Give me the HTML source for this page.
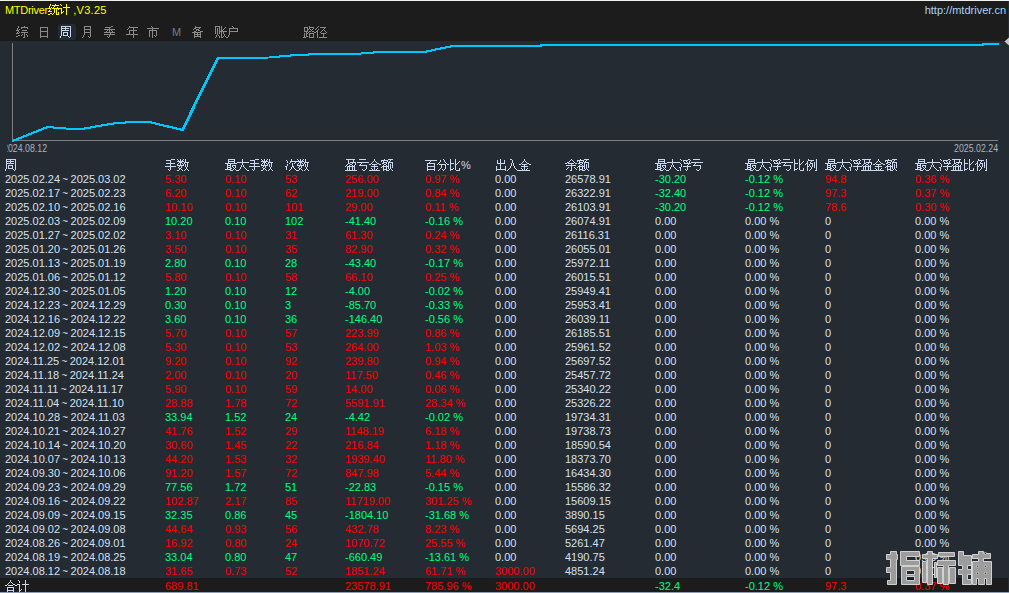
<!DOCTYPE html>
<html><head><meta charset="utf-8">
<style>
html,body{margin:0;padding:0;}
body{width:1009px;height:593px;position:relative;overflow:hidden;background:#252b33;font-family:"Liberation Sans",sans-serif;font-size:11px;}
.topline{position:absolute;left:0;top:0;width:1009px;height:1px;background:#f0f0f0;}
.hdr{position:absolute;left:0;top:1px;width:1008px;height:40px;background:#1c1c1c;}
.title{position:absolute;left:5px;top:4px;color:#ffff00;font-size:11px;line-height:13px;white-space:nowrap;}
.url{position:absolute;right:3px;top:4px;color:#a8d4f8;font-size:11px;line-height:13px;}
.tab{position:absolute;top:24px;height:16px;line-height:16px;color:#8a8a8a;font-size:12px;white-space:nowrap;}
.tabact{position:absolute;left:58px;top:24px;width:18px;height:16px;background:#222a33;border-radius:2px;}
.chart{position:absolute;left:0;top:41px;}
.row{position:absolute;left:0;height:14px;width:1009px;}
.row span{position:absolute;top:0;line-height:14px;white-space:nowrap;}
.w{color:#d4e0f0;}
.r{color:#ff0000;}
.g{color:#00ff7f;}
.hd{color:#cad8ef;font-size:12px;}
.total{position:absolute;left:0;top:578px;width:1008px;height:14px;background:#1c1c1c;}
.botline{position:absolute;left:0;top:592px;width:1009px;height:1px;background:#8c9db5;}
.axlbl{position:absolute;top:143px;color:#a9b3c1;font-size:10px;line-height:12px;transform-origin:0 0;transform:scaleX(0.88);}
</style></head><body>
<div class="topline"></div>
<div class="hdr"></div>
<div class="title"><span style="letter-spacing:-0.3px">MTDriver</span><svg width="11" height="6" viewBox="0 0 11 6" style="overflow:visible;vertical-align:baseline;display:inline;position:static" fill="currentColor" shape-rendering="crispEdges"><path d="M2,-4h1v1h-1zM7,-4h1v1h-1zM2,-3h1v1h-1zM4,-3h7v1h-7zM1,-2h1v1h-1zM6,-2h1v1h-1zM1,-1h1v1h-1zM3,-1h1v1h-1zM5,-1h1v1h-1zM9,-1h1v1h-1zM0,0h3v1h-3zM4,0h7v1h-7zM2,1h1v1h-1zM6,1h1v1h-1zM8,1h1v1h-1zM10,1h1v1h-1zM1,2h1v1h-1zM6,2h1v1h-1zM8,2h1v1h-1zM0,3h4v1h-4zM6,3h1v1h-1zM8,3h1v1h-1zM6,4h1v1h-1zM8,4h1v1h-1zM10,4h1v1h-1zM2,5h2v1h-2zM5,5h1v1h-1zM8,5h1v1h-1zM10,5h1v1h-1zM0,6h2v1h-2zM4,6h1v1h-1zM8,6h3v1h-3z"/></svg><svg width="11" height="6" viewBox="0 0 11 6" style="overflow:visible;vertical-align:baseline;display:inline;position:static" fill="currentColor" shape-rendering="crispEdges"><path d="M1,-4h1v1h-1zM7,-4h1v1h-1zM2,-3h1v1h-1zM7,-3h1v1h-1zM7,-2h1v1h-1zM4,-1h7v1h-7zM0,0h3v1h-3zM7,0h1v1h-1zM2,1h1v1h-1zM7,1h1v1h-1zM2,2h1v1h-1zM7,2h1v1h-1zM2,3h1v1h-1zM4,3h1v1h-1zM7,3h1v1h-1zM2,4h2v1h-2zM7,4h1v1h-1zM2,5h1v1h-1zM7,5h1v1h-1zM7,6h1v1h-1z"/></svg><span style="letter-spacing:0.3px"> ,V3.25</span></div>
<div class="url">http://mtdriver.cn</div>
<div class="tabact"></div>
<div class="tab" style="left:16px"><svg width="12" height="6" viewBox="0 0 12 6" style="overflow:visible;vertical-align:baseline;display:inline;position:static" fill="currentColor" shape-rendering="crispEdges"><path d="M2,-4h1v1h-1zM8,-4h1v1h-1zM2,-3h1v1h-1zM5,-3h7v1h-7zM1,-2h1v1h-1zM5,-2h1v1h-1zM11,-2h1v1h-1zM1,-1h1v1h-1zM3,-1h1v1h-1zM0,0h3v1h-3zM6,0h5v1h-5zM2,1h1v1h-1zM1,2h1v1h-1zM3,2h1v1h-1zM5,2h7v1h-7zM0,3h3v1h-3zM8,3h1v1h-1zM6,4h1v1h-1zM8,4h1v1h-1zM10,4h1v1h-1zM2,5h2v1h-2zM5,5h1v1h-1zM8,5h1v1h-1zM11,5h1v1h-1zM0,6h2v1h-2zM8,6h1v1h-1zM11,6h1v1h-1zM7,7h2v1h-2z"/></svg></div>
<div class="tab" style="left:38px"><svg width="12" height="6" viewBox="0 0 12 6" style="overflow:visible;vertical-align:baseline;display:inline;position:static" fill="currentColor" shape-rendering="crispEdges"><path d="M2,-3h8v1h-8zM2,-2h1v1h-1zM9,-2h1v1h-1zM2,-1h1v1h-1zM9,-1h1v1h-1zM2,0h1v1h-1zM9,0h1v1h-1zM2,1h8v1h-8zM2,2h1v1h-1zM9,2h1v1h-1zM2,3h1v1h-1zM9,3h1v1h-1zM2,4h1v1h-1zM9,4h1v1h-1zM2,5h1v1h-1zM9,5h1v1h-1zM2,6h8v1h-8zM2,7h1v1h-1zM9,7h1v1h-1z"/></svg></div>
<div class="tab" style="left:60px;color:#c8d6e6"><svg width="12" height="6" viewBox="0 0 12 6" style="overflow:visible;vertical-align:baseline;display:inline;position:static" fill="currentColor" shape-rendering="crispEdges"><path d="M1,-4h10v1h-10zM1,-3h1v1h-1zM5,-3h1v1h-1zM10,-3h1v1h-1zM1,-2h8v1h-8zM10,-2h1v1h-1zM1,-1h1v1h-1zM5,-1h1v1h-1zM10,-1h1v1h-1zM1,0h8v1h-8zM10,0h1v1h-1zM1,1h1v1h-1zM10,1h1v1h-1zM1,2h1v1h-1zM3,2h5v1h-5zM10,2h1v1h-1zM1,3h1v1h-1zM3,3h1v1h-1zM7,3h1v1h-1zM10,3h1v1h-1zM1,4h1v1h-1zM3,4h1v1h-1zM7,4h1v1h-1zM10,4h1v1h-1zM1,5h1v1h-1zM3,5h5v1h-5zM10,5h1v1h-1zM0,6h1v1h-1zM8,6h1v1h-1zM10,6h1v1h-1zM0,7h1v1h-1zM9,7h1v1h-1z"/></svg></div>
<div class="tab" style="left:81px"><svg width="12" height="6" viewBox="0 0 12 6" style="overflow:visible;vertical-align:baseline;display:inline;position:static" fill="currentColor" shape-rendering="crispEdges"><path d="M3,-4h7v1h-7zM3,-3h1v1h-1zM9,-3h1v1h-1zM3,-2h1v1h-1zM9,-2h1v1h-1zM3,-1h7v1h-7zM3,0h1v1h-1zM9,0h1v1h-1zM3,1h1v1h-1zM9,1h1v1h-1zM3,2h7v1h-7zM3,3h1v1h-1zM9,3h1v1h-1zM3,4h1v1h-1zM9,4h1v1h-1zM2,5h1v1h-1zM9,5h1v1h-1zM2,6h1v1h-1zM7,6h1v1h-1zM9,6h1v1h-1zM1,7h1v1h-1zM8,7h1v1h-1z"/></svg></div>
<div class="tab" style="left:104px"><svg width="12" height="6" viewBox="0 0 12 6" style="overflow:visible;vertical-align:baseline;display:inline;position:static" fill="currentColor" shape-rendering="crispEdges"><path d="M7,-4h2v1h-2zM1,-3h6v1h-6zM5,-2h1v1h-1zM0,-1h11v1h-11zM3,0h1v1h-1zM5,0h1v1h-1zM7,0h1v1h-1zM2,1h1v1h-1zM5,1h1v1h-1zM8,1h1v1h-1zM0,2h11v1h-11zM6,3h1v1h-1zM0,4h11v1h-11zM5,5h1v1h-1zM3,6h1v1h-1zM5,6h1v1h-1zM4,7h1v1h-1z"/></svg></div>
<div class="tab" style="left:126px"><svg width="12" height="6" viewBox="0 0 12 6" style="overflow:visible;vertical-align:baseline;display:inline;position:static" fill="currentColor" shape-rendering="crispEdges"><path d="M3,-4h1v1h-1zM3,-3h9v1h-9zM2,-2h1v1h-1zM7,-2h1v1h-1zM1,-1h1v1h-1zM7,-1h1v1h-1zM3,0h8v1h-8zM3,1h1v1h-1zM7,1h1v1h-1zM3,2h1v1h-1zM7,2h1v1h-1zM3,3h1v1h-1zM7,3h1v1h-1zM0,4h12v1h-12zM7,5h1v1h-1zM7,6h1v1h-1zM7,7h1v1h-1z"/></svg></div>
<div class="tab" style="left:147px"><svg width="12" height="6" viewBox="0 0 12 6" style="overflow:visible;vertical-align:baseline;display:inline;position:static" fill="currentColor" shape-rendering="crispEdges"><path d="M4,-4h1v1h-1zM5,-3h1v1h-1zM0,-2h12v1h-12zM5,-1h1v1h-1zM2,0h8v1h-8zM2,1h1v1h-1zM5,1h1v1h-1zM9,1h1v1h-1zM2,2h1v1h-1zM5,2h1v1h-1zM9,2h1v1h-1zM2,3h1v1h-1zM5,3h1v1h-1zM9,3h1v1h-1zM2,4h1v1h-1zM5,4h1v1h-1zM9,4h1v1h-1zM2,5h1v1h-1zM5,5h1v1h-1zM7,5h1v1h-1zM9,5h1v1h-1zM2,6h1v1h-1zM5,6h1v1h-1zM8,6h1v1h-1zM5,7h1v1h-1z"/></svg></div>
<div class="tab" style="left:172px;font-size:11px;color:#6f7f94">M</div>
<div class="tab" style="left:192px"><svg width="12" height="6" viewBox="0 0 12 6" style="overflow:visible;vertical-align:baseline;display:inline;position:static" fill="currentColor" shape-rendering="crispEdges"><path d="M3,-4h1v1h-1zM3,-3h6v1h-6zM2,-2h2v1h-2zM7,-2h1v1h-1zM1,-1h1v1h-1zM4,-1h3v1h-3zM4,0h1v1h-1zM6,0h2v1h-2zM2,1h2v1h-2zM8,1h3v1h-3zM0,2h9v1h-9zM2,3h1v1h-1zM5,3h1v1h-1zM8,3h1v1h-1zM2,4h7v1h-7zM2,5h1v1h-1zM5,5h1v1h-1zM8,5h1v1h-1zM2,6h7v1h-7zM2,7h1v1h-1zM8,7h1v1h-1z"/></svg></div>
<div class="tab" style="left:215px"><svg width="12" height="6" viewBox="0 0 12 6" style="overflow:visible;vertical-align:baseline;display:inline;position:static" fill="currentColor" shape-rendering="crispEdges"><path d="M0,-4h5v1h-5zM6,-4h1v1h-1zM0,-3h1v1h-1zM4,-3h1v1h-1zM6,-3h1v1h-1zM10,-3h1v1h-1zM0,-2h1v1h-1zM2,-2h1v1h-1zM4,-2h1v1h-1zM6,-2h1v1h-1zM9,-2h1v1h-1zM0,-1h1v1h-1zM2,-1h1v1h-1zM4,-1h1v1h-1zM6,-1h1v1h-1zM8,-1h1v1h-1zM0,0h1v1h-1zM2,0h1v1h-1zM4,0h1v1h-1zM6,0h2v1h-2zM0,1h1v1h-1zM2,1h1v1h-1zM4,1h8v1h-8zM0,2h1v1h-1zM2,2h1v1h-1zM4,2h1v1h-1zM6,2h1v1h-1zM8,2h1v1h-1zM0,3h1v1h-1zM2,3h1v1h-1zM4,3h1v1h-1zM6,3h1v1h-1zM8,3h1v1h-1zM2,4h1v1h-1zM6,4h1v1h-1zM9,4h1v1h-1zM1,5h1v1h-1zM3,5h1v1h-1zM6,5h1v1h-1zM9,5h1v1h-1zM1,6h1v1h-1zM4,6h1v1h-1zM6,6h1v1h-1zM8,6h1v1h-1zM10,6h1v1h-1zM0,7h1v1h-1zM4,7h1v1h-1zM6,7h2v1h-2zM11,7h1v1h-1z"/></svg><svg width="12" height="6" viewBox="0 0 12 6" style="overflow:visible;vertical-align:baseline;display:inline;position:static" fill="currentColor" shape-rendering="crispEdges"><path d="M5,-4h1v1h-1zM6,-3h1v1h-1zM2,-2h9v1h-9zM2,-1h1v1h-1zM10,-1h1v1h-1zM2,0h1v1h-1zM10,0h1v1h-1zM2,1h9v1h-9zM2,2h1v1h-1zM2,3h1v1h-1zM2,4h1v1h-1zM1,5h1v1h-1zM1,6h1v1h-1zM0,7h1v1h-1z"/></svg></div>
<div class="tab" style="left:303px"><svg width="12" height="6" viewBox="0 0 12 6" style="overflow:visible;vertical-align:baseline;display:inline;position:static" fill="currentColor" shape-rendering="crispEdges"><path d="M6,-4h1v1h-1zM1,-3h4v1h-4zM6,-3h5v1h-5zM1,-2h1v1h-1zM4,-2h1v1h-1zM6,-2h1v1h-1zM10,-2h1v1h-1zM1,-1h1v1h-1zM4,-1h2v1h-2zM7,-1h1v1h-1zM9,-1h1v1h-1zM1,0h1v1h-1zM4,0h1v1h-1zM8,0h1v1h-1zM1,1h4v1h-4zM6,1h2v1h-2zM9,1h2v1h-2zM3,2h1v1h-1zM5,2h1v1h-1zM11,2h1v1h-1zM1,3h1v1h-1zM3,3h2v1h-2zM6,3h5v1h-5zM1,4h1v1h-1zM3,4h1v1h-1zM6,4h1v1h-1zM10,4h1v1h-1zM1,5h1v1h-1zM3,5h1v1h-1zM6,5h1v1h-1zM10,5h1v1h-1zM1,6h1v1h-1zM3,6h2v1h-2zM6,6h1v1h-1zM10,6h1v1h-1zM0,7h3v1h-3zM6,7h5v1h-5z"/></svg><svg width="12" height="6" viewBox="0 0 12 6" style="overflow:visible;vertical-align:baseline;display:inline;position:static" fill="currentColor" shape-rendering="crispEdges"><path d="M3,-4h1v1h-1zM2,-3h1v1h-1zM5,-3h6v1h-6zM1,-2h1v1h-1zM9,-2h1v1h-1zM0,-1h1v1h-1zM3,-1h1v1h-1zM8,-1h1v1h-1zM2,0h1v1h-1zM7,0h1v1h-1zM9,0h1v1h-1zM1,1h2v1h-2zM6,1h1v1h-1zM10,1h1v1h-1zM0,2h1v1h-1zM2,2h1v1h-1zM5,2h1v1h-1zM11,2h1v1h-1zM2,3h1v1h-1zM6,3h5v1h-5zM2,4h1v1h-1zM8,4h1v1h-1zM2,5h1v1h-1zM8,5h1v1h-1zM2,6h1v1h-1zM8,6h1v1h-1zM2,7h1v1h-1zM4,7h8v1h-8z"/></svg></div>
<svg class="chart" width="1009" height="110" viewBox="0 41 1009 110" style="position:absolute;left:0;top:41px">
<line x1="12.5" y1="43" x2="12.5" y2="141" stroke="#7f7f7f" stroke-width="1"/>
<line x1="12" y1="140.5" x2="998" y2="140.5" stroke="#7f7f7f" stroke-width="1"/>
<polyline points="12,141 47,127 78,129.5 113,123.5 125,122.5 147,121.5 182,130 217.5,58 269,57.5 290,55.5 303,55 314,54 361.5,53.5 379.5,52 423.5,52 452.5,46 540.5,46 541,45 982,45 982.5,44 998,44" fill="none" stroke="#00c8ff" stroke-width="2" stroke-linejoin="miter" shape-rendering="crispEdges"/>
<polyline points="12,141 47,127 78,129.5 113,123.5 125,122.5 147,121.5 182,130 217.5,58 269,57.5 290,55.5 303,55 314,54 361.5,53.5 379.5,52 423.5,52 452.5,46 540.5,46 541,45 982,45 982.5,44 998,44" fill="none" stroke="#00c8ff" stroke-width="2" stroke-linejoin="miter" shape-rendering="crispEdges" transform="translate(0.8,0)"/>
</svg>
<svg width="1009" height="60" style="position:absolute;left:0;top:0"><polygon points="1004.5,41.5 1009,37.5 1009,45.5" fill="#c8c8c8"/></svg>
<div style="position:absolute;left:7px;top:143px;width:60px;height:14px;overflow:hidden"><div class="axlbl" style="left:-4px;top:0">2024.08.12</div></div>
<div class="axlbl" style="left:954px">2025.02.24</div>
<div class="row" style="top:158px"><span class="hd" style="left:5px"><svg width="12" height="6" viewBox="0 0 12 6" style="overflow:visible;vertical-align:baseline;display:inline;position:static" fill="currentColor" shape-rendering="crispEdges"><path d="M1,-4h10v1h-10zM1,-3h1v1h-1zM5,-3h1v1h-1zM10,-3h1v1h-1zM1,-2h8v1h-8zM10,-2h1v1h-1zM1,-1h1v1h-1zM5,-1h1v1h-1zM10,-1h1v1h-1zM1,0h8v1h-8zM10,0h1v1h-1zM1,1h1v1h-1zM10,1h1v1h-1zM1,2h1v1h-1zM3,2h5v1h-5zM10,2h1v1h-1zM1,3h1v1h-1zM3,3h1v1h-1zM7,3h1v1h-1zM10,3h1v1h-1zM1,4h1v1h-1zM3,4h1v1h-1zM7,4h1v1h-1zM10,4h1v1h-1zM1,5h1v1h-1zM3,5h5v1h-5zM10,5h1v1h-1zM0,6h1v1h-1zM8,6h1v1h-1zM10,6h1v1h-1zM0,7h1v1h-1zM9,7h1v1h-1z"/></svg></span><span class="hd" style="left:165px"><svg width="12" height="6" viewBox="0 0 12 6" style="overflow:visible;vertical-align:baseline;display:inline;position:static" fill="currentColor" shape-rendering="crispEdges"><path d="M6,-4h4v1h-4zM1,-3h5v1h-5zM5,-2h1v1h-1zM5,-1h1v1h-1zM1,0h9v1h-9zM5,1h1v1h-1zM5,2h1v1h-1zM0,3h11v1h-11zM5,4h1v1h-1zM5,5h1v1h-1zM3,6h1v1h-1zM5,6h1v1h-1zM4,7h1v1h-1z"/></svg><svg width="12" height="6" viewBox="0 0 12 6" style="overflow:visible;vertical-align:baseline;display:inline;position:static" fill="currentColor" shape-rendering="crispEdges"><path d="M0,-4h1v1h-1zM3,-4h1v1h-1zM6,-4h1v1h-1zM8,-4h1v1h-1zM1,-3h1v1h-1zM3,-3h1v1h-1zM5,-3h1v1h-1zM8,-3h1v1h-1zM0,-2h7v1h-7zM8,-2h1v1h-1zM2,-1h3v1h-3zM7,-1h5v1h-5zM1,0h1v1h-1zM3,0h1v1h-1zM5,0h1v1h-1zM7,0h1v1h-1zM10,0h1v1h-1zM0,1h1v1h-1zM3,1h1v1h-1zM6,1h1v1h-1zM8,1h1v1h-1zM10,1h1v1h-1zM0,2h7v1h-7zM8,2h1v1h-1zM10,2h1v1h-1zM2,3h1v1h-1zM4,3h1v1h-1zM8,3h1v1h-1zM10,3h1v1h-1zM1,4h1v1h-1zM4,4h1v1h-1zM9,4h1v1h-1zM2,5h2v1h-2zM9,5h1v1h-1zM2,6h1v1h-1zM4,6h1v1h-1zM8,6h1v1h-1zM10,6h1v1h-1zM0,7h2v1h-2zM5,7h1v1h-1zM7,7h1v1h-1zM11,7h1v1h-1z"/></svg></span><span class="hd" style="left:225px"><svg width="12" height="6" viewBox="0 0 12 6" style="overflow:visible;vertical-align:baseline;display:inline;position:static" fill="currentColor" shape-rendering="crispEdges"><path d="M3,-4h7v1h-7zM3,-3h1v1h-1zM9,-3h1v1h-1zM3,-2h7v1h-7zM3,-1h1v1h-1zM9,-1h1v1h-1zM0,0h12v1h-12zM2,1h1v1h-1zM5,1h1v1h-1zM2,2h4v1h-4zM7,2h4v1h-4zM2,3h1v1h-1zM5,3h1v1h-1zM7,3h1v1h-1zM10,3h1v1h-1zM2,4h4v1h-4zM8,4h1v1h-1zM10,4h1v1h-1zM2,5h1v1h-1zM5,5h2v1h-2zM9,5h1v1h-1zM0,6h6v1h-6zM8,6h1v1h-1zM10,6h1v1h-1zM5,7h3v1h-3zM11,7h1v1h-1z"/></svg><svg width="12" height="6" viewBox="0 0 12 6" style="overflow:visible;vertical-align:baseline;display:inline;position:static" fill="currentColor" shape-rendering="crispEdges"><path d="M5,-4h1v1h-1zM5,-3h1v1h-1zM5,-2h1v1h-1zM0,-1h12v1h-12zM5,0h1v1h-1zM5,1h1v1h-1zM4,2h1v1h-1zM6,2h1v1h-1zM4,3h1v1h-1zM6,3h1v1h-1zM3,4h1v1h-1zM7,4h1v1h-1zM3,5h1v1h-1zM8,5h1v1h-1zM2,6h1v1h-1zM9,6h1v1h-1zM0,7h2v1h-2zM10,7h2v1h-2z"/></svg><svg width="12" height="6" viewBox="0 0 12 6" style="overflow:visible;vertical-align:baseline;display:inline;position:static" fill="currentColor" shape-rendering="crispEdges"><path d="M6,-4h4v1h-4zM1,-3h5v1h-5zM5,-2h1v1h-1zM5,-1h1v1h-1zM1,0h9v1h-9zM5,1h1v1h-1zM5,2h1v1h-1zM0,3h11v1h-11zM5,4h1v1h-1zM5,5h1v1h-1zM3,6h1v1h-1zM5,6h1v1h-1zM4,7h1v1h-1z"/></svg><svg width="12" height="6" viewBox="0 0 12 6" style="overflow:visible;vertical-align:baseline;display:inline;position:static" fill="currentColor" shape-rendering="crispEdges"><path d="M0,-4h1v1h-1zM3,-4h1v1h-1zM6,-4h1v1h-1zM8,-4h1v1h-1zM1,-3h1v1h-1zM3,-3h1v1h-1zM5,-3h1v1h-1zM8,-3h1v1h-1zM0,-2h7v1h-7zM8,-2h1v1h-1zM2,-1h3v1h-3zM7,-1h5v1h-5zM1,0h1v1h-1zM3,0h1v1h-1zM5,0h1v1h-1zM7,0h1v1h-1zM10,0h1v1h-1zM0,1h1v1h-1zM3,1h1v1h-1zM6,1h1v1h-1zM8,1h1v1h-1zM10,1h1v1h-1zM0,2h7v1h-7zM8,2h1v1h-1zM10,2h1v1h-1zM2,3h1v1h-1zM4,3h1v1h-1zM8,3h1v1h-1zM10,3h1v1h-1zM1,4h1v1h-1zM4,4h1v1h-1zM9,4h1v1h-1zM2,5h2v1h-2zM9,5h1v1h-1zM2,6h1v1h-1zM4,6h1v1h-1zM8,6h1v1h-1zM10,6h1v1h-1zM0,7h2v1h-2zM5,7h1v1h-1zM7,7h1v1h-1zM11,7h1v1h-1z"/></svg></span><span class="hd" style="left:285px"><svg width="12" height="6" viewBox="0 0 12 6" style="overflow:visible;vertical-align:baseline;display:inline;position:static" fill="currentColor" shape-rendering="crispEdges"><path d="M6,-4h1v1h-1zM1,-3h1v1h-1zM6,-3h1v1h-1zM2,-2h1v1h-1zM5,-2h7v1h-7zM2,-1h1v1h-1zM5,-1h1v1h-1zM10,-1h1v1h-1zM4,0h1v1h-1zM7,0h1v1h-1zM9,0h1v1h-1zM2,1h1v1h-1zM7,1h1v1h-1zM2,2h1v1h-1zM7,2h1v1h-1zM0,3h2v1h-2zM7,3h2v1h-2zM1,4h1v1h-1zM6,4h1v1h-1zM8,4h1v1h-1zM1,5h1v1h-1zM6,5h1v1h-1zM9,5h1v1h-1zM1,6h1v1h-1zM5,6h1v1h-1zM10,6h1v1h-1zM4,7h1v1h-1zM11,7h1v1h-1z"/></svg><svg width="12" height="6" viewBox="0 0 12 6" style="overflow:visible;vertical-align:baseline;display:inline;position:static" fill="currentColor" shape-rendering="crispEdges"><path d="M0,-4h1v1h-1zM3,-4h1v1h-1zM6,-4h1v1h-1zM8,-4h1v1h-1zM1,-3h1v1h-1zM3,-3h1v1h-1zM5,-3h1v1h-1zM8,-3h1v1h-1zM0,-2h7v1h-7zM8,-2h1v1h-1zM2,-1h3v1h-3zM7,-1h5v1h-5zM1,0h1v1h-1zM3,0h1v1h-1zM5,0h1v1h-1zM7,0h1v1h-1zM10,0h1v1h-1zM0,1h1v1h-1zM3,1h1v1h-1zM6,1h1v1h-1zM8,1h1v1h-1zM10,1h1v1h-1zM0,2h7v1h-7zM8,2h1v1h-1zM10,2h1v1h-1zM2,3h1v1h-1zM4,3h1v1h-1zM8,3h1v1h-1zM10,3h1v1h-1zM1,4h1v1h-1zM4,4h1v1h-1zM9,4h1v1h-1zM2,5h2v1h-2zM9,5h1v1h-1zM2,6h1v1h-1zM4,6h1v1h-1zM8,6h1v1h-1zM10,6h1v1h-1zM0,7h2v1h-2zM5,7h1v1h-1zM7,7h1v1h-1zM11,7h1v1h-1z"/></svg></span><span class="hd" style="left:345px"><svg width="12" height="6" viewBox="0 0 12 6" style="overflow:visible;vertical-align:baseline;display:inline;position:static" fill="currentColor" shape-rendering="crispEdges"><path d="M1,-4h9v1h-9zM3,-3h1v1h-1zM8,-3h1v1h-1zM3,-2h1v1h-1zM8,-2h1v1h-1zM3,-1h1v1h-1zM5,-1h6v1h-6zM3,0h2v1h-2zM7,0h1v1h-1zM10,0h1v1h-1zM2,1h1v1h-1zM5,1h2v1h-2zM10,1h1v1h-1zM1,2h1v1h-1zM4,2h1v1h-1zM7,2h1v1h-1zM9,2h1v1h-1zM0,3h1v1h-1zM2,3h8v1h-8zM2,4h1v1h-1zM4,4h1v1h-1zM7,4h1v1h-1zM9,4h1v1h-1zM2,5h1v1h-1zM4,5h1v1h-1zM7,5h1v1h-1zM9,5h1v1h-1zM2,6h1v1h-1zM4,6h1v1h-1zM7,6h1v1h-1zM9,6h1v1h-1zM0,7h12v1h-12z"/></svg><svg width="12" height="6" viewBox="0 0 12 6" style="overflow:visible;vertical-align:baseline;display:inline;position:static" fill="currentColor" shape-rendering="crispEdges"><path d="M2,-4h7v1h-7zM0,-1h12v1h-12zM4,0h1v1h-1zM3,1h1v1h-1zM2,2h8v1h-8zM9,3h1v1h-1zM9,4h1v1h-1zM9,5h1v1h-1zM5,6h1v1h-1zM8,6h1v1h-1zM6,7h2v1h-2z"/></svg><svg width="12" height="6" viewBox="0 0 12 6" style="overflow:visible;vertical-align:baseline;display:inline;position:static" fill="currentColor" shape-rendering="crispEdges"><path d="M5,-4h1v1h-1zM5,-3h1v1h-1zM4,-2h1v1h-1zM6,-2h1v1h-1zM3,-1h1v1h-1zM7,-1h1v1h-1zM2,0h1v1h-1zM8,0h2v1h-2zM0,1h2v1h-2zM3,1h5v1h-5zM10,1h2v1h-2zM5,2h1v1h-1zM2,3h7v1h-7zM5,4h1v1h-1zM2,5h1v1h-1zM5,5h1v1h-1zM8,5h1v1h-1zM3,6h1v1h-1zM5,6h1v1h-1zM7,6h1v1h-1zM0,7h11v1h-11z"/></svg><svg width="12" height="6" viewBox="0 0 12 6" style="overflow:visible;vertical-align:baseline;display:inline;position:static" fill="currentColor" shape-rendering="crispEdges"><path d="M3,-4h1v1h-1zM7,-4h5v1h-5zM0,-3h7v1h-7zM9,-3h1v1h-1zM0,-2h1v1h-1zM2,-2h1v1h-1zM6,-2h1v1h-1zM8,-2h1v1h-1zM2,-1h4v1h-4zM7,-1h5v1h-5zM1,0h2v1h-2zM5,0h1v1h-1zM7,0h1v1h-1zM11,0h1v1h-1zM3,1h2v1h-2zM7,1h1v1h-1zM9,1h1v1h-1zM11,1h1v1h-1zM2,2h1v1h-1zM5,2h1v1h-1zM7,2h1v1h-1zM9,2h1v1h-1zM11,2h1v1h-1zM1,3h7v1h-7zM9,3h1v1h-1zM11,3h1v1h-1zM0,4h1v1h-1zM2,4h1v1h-1zM5,4h1v1h-1zM7,4h1v1h-1zM9,4h1v1h-1zM11,4h1v1h-1zM2,5h1v1h-1zM5,5h1v1h-1zM7,5h1v1h-1zM9,5h1v1h-1zM2,6h4v1h-4zM8,6h1v1h-1zM10,6h1v1h-1zM2,7h1v1h-1zM5,7h3v1h-3zM11,7h1v1h-1z"/></svg></span><span class="hd" style="left:425px"><svg width="12" height="6" viewBox="0 0 12 6" style="overflow:visible;vertical-align:baseline;display:inline;position:static" fill="currentColor" shape-rendering="crispEdges"><path d="M0,-3h12v1h-12zM5,-2h1v1h-1zM4,-1h1v1h-1zM2,0h8v1h-8zM2,1h1v1h-1zM9,1h1v1h-1zM2,2h1v1h-1zM9,2h1v1h-1zM2,3h8v1h-8zM2,4h1v1h-1zM9,4h1v1h-1zM2,5h1v1h-1zM9,5h1v1h-1zM2,6h8v1h-8zM2,7h1v1h-1zM9,7h1v1h-1z"/></svg><svg width="12" height="6" viewBox="0 0 12 6" style="overflow:visible;vertical-align:baseline;display:inline;position:static" fill="currentColor" shape-rendering="crispEdges"><path d="M6,-4h1v1h-1zM3,-3h1v1h-1zM7,-3h1v1h-1zM3,-2h1v1h-1zM7,-2h1v1h-1zM2,-1h1v1h-1zM8,-1h1v1h-1zM1,0h1v1h-1zM9,0h1v1h-1zM0,1h1v1h-1zM2,1h7v1h-7zM10,1h2v1h-2zM4,2h1v1h-1zM8,2h1v1h-1zM4,3h1v1h-1zM8,3h1v1h-1zM4,4h1v1h-1zM8,4h1v1h-1zM3,5h1v1h-1zM8,5h1v1h-1zM2,6h1v1h-1zM5,6h1v1h-1zM7,6h1v1h-1zM1,7h1v1h-1zM6,7h1v1h-1z"/></svg><svg width="12" height="6" viewBox="0 0 12 6" style="overflow:visible;vertical-align:baseline;display:inline;position:static" fill="currentColor" shape-rendering="crispEdges"><path d="M1,-4h1v1h-1zM6,-4h1v1h-1zM1,-3h1v1h-1zM6,-3h1v1h-1zM1,-2h1v1h-1zM6,-2h1v1h-1zM10,-2h1v1h-1zM1,-1h1v1h-1zM6,-1h1v1h-1zM9,-1h1v1h-1zM1,0h4v1h-4zM6,0h1v1h-1zM8,0h1v1h-1zM1,1h1v1h-1zM6,1h2v1h-2zM1,2h1v1h-1zM6,2h1v1h-1zM1,3h1v1h-1zM6,3h1v1h-1zM1,4h1v1h-1zM6,4h1v1h-1zM1,5h1v1h-1zM4,5h1v1h-1zM6,5h1v1h-1zM10,5h1v1h-1zM1,6h3v1h-3zM6,6h1v1h-1zM10,6h1v1h-1zM1,7h1v1h-1zM7,7h4v1h-4z"/></svg><span style="position:static;font-size:11px">%</span></span><span class="hd" style="left:495px"><svg width="12" height="6" viewBox="0 0 12 6" style="overflow:visible;vertical-align:baseline;display:inline;position:static" fill="currentColor" shape-rendering="crispEdges"><path d="M5,-4h1v1h-1zM2,-3h1v1h-1zM5,-3h1v1h-1zM9,-3h1v1h-1zM2,-2h1v1h-1zM5,-2h1v1h-1zM9,-2h1v1h-1zM2,-1h1v1h-1zM5,-1h1v1h-1zM9,-1h1v1h-1zM2,0h8v1h-8zM5,1h1v1h-1zM5,2h1v1h-1zM1,3h1v1h-1zM5,3h1v1h-1zM10,3h1v1h-1zM1,4h1v1h-1zM5,4h1v1h-1zM10,4h1v1h-1zM1,5h1v1h-1zM5,5h1v1h-1zM10,5h1v1h-1zM1,6h10v1h-10zM1,7h1v1h-1zM10,7h1v1h-1z"/></svg><svg width="12" height="6" viewBox="0 0 12 6" style="overflow:visible;vertical-align:baseline;display:inline;position:static" fill="currentColor" shape-rendering="crispEdges"><path d="M3,-4h2v1h-2zM5,-3h1v1h-1zM5,-2h1v1h-1zM5,-1h1v1h-1zM4,0h1v1h-1zM6,0h1v1h-1zM4,1h1v1h-1zM6,1h1v1h-1zM4,2h1v1h-1zM6,2h1v1h-1zM3,3h1v1h-1zM7,3h1v1h-1zM3,4h1v1h-1zM7,4h1v1h-1zM2,5h1v1h-1zM8,5h1v1h-1zM1,6h1v1h-1zM9,6h1v1h-1zM0,7h1v1h-1zM10,7h2v1h-2z"/></svg><svg width="12" height="6" viewBox="0 0 12 6" style="overflow:visible;vertical-align:baseline;display:inline;position:static" fill="currentColor" shape-rendering="crispEdges"><path d="M5,-4h1v1h-1zM5,-3h1v1h-1zM4,-2h1v1h-1zM6,-2h1v1h-1zM3,-1h1v1h-1zM7,-1h1v1h-1zM2,0h1v1h-1zM8,0h2v1h-2zM0,1h2v1h-2zM3,1h5v1h-5zM10,1h2v1h-2zM5,2h1v1h-1zM2,3h7v1h-7zM5,4h1v1h-1zM2,5h1v1h-1zM5,5h1v1h-1zM8,5h1v1h-1zM3,6h1v1h-1zM5,6h1v1h-1zM7,6h1v1h-1zM0,7h11v1h-11z"/></svg></span><span class="hd" style="left:565px"><svg width="12" height="6" viewBox="0 0 12 6" style="overflow:visible;vertical-align:baseline;display:inline;position:static" fill="currentColor" shape-rendering="crispEdges"><path d="M6,-4h1v1h-1zM5,-3h1v1h-1zM7,-3h1v1h-1zM4,-2h1v1h-1zM8,-2h1v1h-1zM2,-1h2v1h-2zM9,-1h1v1h-1zM0,0h2v1h-2zM3,0h6v1h-6zM10,0h2v1h-2zM6,1h1v1h-1zM1,2h10v1h-10zM6,3h1v1h-1zM3,4h1v1h-1zM6,4h1v1h-1zM9,4h1v1h-1zM2,5h1v1h-1zM6,5h1v1h-1zM10,5h1v1h-1zM1,6h1v1h-1zM6,6h1v1h-1zM11,6h1v1h-1zM5,7h2v1h-2z"/></svg><svg width="12" height="6" viewBox="0 0 12 6" style="overflow:visible;vertical-align:baseline;display:inline;position:static" fill="currentColor" shape-rendering="crispEdges"><path d="M3,-4h1v1h-1zM7,-4h5v1h-5zM0,-3h7v1h-7zM9,-3h1v1h-1zM0,-2h1v1h-1zM2,-2h1v1h-1zM6,-2h1v1h-1zM8,-2h1v1h-1zM2,-1h4v1h-4zM7,-1h5v1h-5zM1,0h2v1h-2zM5,0h1v1h-1zM7,0h1v1h-1zM11,0h1v1h-1zM3,1h2v1h-2zM7,1h1v1h-1zM9,1h1v1h-1zM11,1h1v1h-1zM2,2h1v1h-1zM5,2h1v1h-1zM7,2h1v1h-1zM9,2h1v1h-1zM11,2h1v1h-1zM1,3h7v1h-7zM9,3h1v1h-1zM11,3h1v1h-1zM0,4h1v1h-1zM2,4h1v1h-1zM5,4h1v1h-1zM7,4h1v1h-1zM9,4h1v1h-1zM11,4h1v1h-1zM2,5h1v1h-1zM5,5h1v1h-1zM7,5h1v1h-1zM9,5h1v1h-1zM2,6h4v1h-4zM8,6h1v1h-1zM10,6h1v1h-1zM2,7h1v1h-1zM5,7h3v1h-3zM11,7h1v1h-1z"/></svg></span><span class="hd" style="left:655px"><svg width="12" height="6" viewBox="0 0 12 6" style="overflow:visible;vertical-align:baseline;display:inline;position:static" fill="currentColor" shape-rendering="crispEdges"><path d="M3,-4h7v1h-7zM3,-3h1v1h-1zM9,-3h1v1h-1zM3,-2h7v1h-7zM3,-1h1v1h-1zM9,-1h1v1h-1zM0,0h12v1h-12zM2,1h1v1h-1zM5,1h1v1h-1zM2,2h4v1h-4zM7,2h4v1h-4zM2,3h1v1h-1zM5,3h1v1h-1zM7,3h1v1h-1zM10,3h1v1h-1zM2,4h4v1h-4zM8,4h1v1h-1zM10,4h1v1h-1zM2,5h1v1h-1zM5,5h2v1h-2zM9,5h1v1h-1zM0,6h6v1h-6zM8,6h1v1h-1zM10,6h1v1h-1zM5,7h3v1h-3zM11,7h1v1h-1z"/></svg><svg width="12" height="6" viewBox="0 0 12 6" style="overflow:visible;vertical-align:baseline;display:inline;position:static" fill="currentColor" shape-rendering="crispEdges"><path d="M5,-4h1v1h-1zM5,-3h1v1h-1zM5,-2h1v1h-1zM0,-1h12v1h-12zM5,0h1v1h-1zM5,1h1v1h-1zM4,2h1v1h-1zM6,2h1v1h-1zM4,3h1v1h-1zM6,3h1v1h-1zM3,4h1v1h-1zM7,4h1v1h-1zM3,5h1v1h-1zM8,5h1v1h-1zM2,6h1v1h-1zM9,6h1v1h-1zM0,7h2v1h-2zM10,7h2v1h-2z"/></svg><svg width="12" height="6" viewBox="0 0 12 6" style="overflow:visible;vertical-align:baseline;display:inline;position:static" fill="currentColor" shape-rendering="crispEdges"><path d="M1,-4h1v1h-1zM9,-4h2v1h-2zM2,-3h1v1h-1zM4,-3h5v1h-5zM11,-3h1v1h-1zM4,-2h1v1h-1zM7,-2h1v1h-1zM10,-2h1v1h-1zM0,-1h1v1h-1zM5,-1h1v1h-1zM8,-1h1v1h-1zM10,-1h1v1h-1zM1,0h1v1h-1zM5,0h7v1h-7zM2,1h1v1h-1zM9,1h1v1h-1zM2,2h1v1h-1zM8,2h1v1h-1zM2,3h1v1h-1zM4,3h8v1h-8zM0,4h2v1h-2zM8,4h1v1h-1zM1,5h1v1h-1zM8,5h1v1h-1zM1,6h1v1h-1zM6,6h1v1h-1zM8,6h1v1h-1zM1,7h1v1h-1zM7,7h1v1h-1z"/></svg><svg width="12" height="6" viewBox="0 0 12 6" style="overflow:visible;vertical-align:baseline;display:inline;position:static" fill="currentColor" shape-rendering="crispEdges"><path d="M2,-4h7v1h-7zM0,-1h12v1h-12zM4,0h1v1h-1zM3,1h1v1h-1zM2,2h8v1h-8zM9,3h1v1h-1zM9,4h1v1h-1zM9,5h1v1h-1zM5,6h1v1h-1zM8,6h1v1h-1zM6,7h2v1h-2z"/></svg></span><span class="hd" style="left:745px"><svg width="12" height="6" viewBox="0 0 12 6" style="overflow:visible;vertical-align:baseline;display:inline;position:static" fill="currentColor" shape-rendering="crispEdges"><path d="M3,-4h7v1h-7zM3,-3h1v1h-1zM9,-3h1v1h-1zM3,-2h7v1h-7zM3,-1h1v1h-1zM9,-1h1v1h-1zM0,0h12v1h-12zM2,1h1v1h-1zM5,1h1v1h-1zM2,2h4v1h-4zM7,2h4v1h-4zM2,3h1v1h-1zM5,3h1v1h-1zM7,3h1v1h-1zM10,3h1v1h-1zM2,4h4v1h-4zM8,4h1v1h-1zM10,4h1v1h-1zM2,5h1v1h-1zM5,5h2v1h-2zM9,5h1v1h-1zM0,6h6v1h-6zM8,6h1v1h-1zM10,6h1v1h-1zM5,7h3v1h-3zM11,7h1v1h-1z"/></svg><svg width="12" height="6" viewBox="0 0 12 6" style="overflow:visible;vertical-align:baseline;display:inline;position:static" fill="currentColor" shape-rendering="crispEdges"><path d="M5,-4h1v1h-1zM5,-3h1v1h-1zM5,-2h1v1h-1zM0,-1h12v1h-12zM5,0h1v1h-1zM5,1h1v1h-1zM4,2h1v1h-1zM6,2h1v1h-1zM4,3h1v1h-1zM6,3h1v1h-1zM3,4h1v1h-1zM7,4h1v1h-1zM3,5h1v1h-1zM8,5h1v1h-1zM2,6h1v1h-1zM9,6h1v1h-1zM0,7h2v1h-2zM10,7h2v1h-2z"/></svg><svg width="12" height="6" viewBox="0 0 12 6" style="overflow:visible;vertical-align:baseline;display:inline;position:static" fill="currentColor" shape-rendering="crispEdges"><path d="M1,-4h1v1h-1zM9,-4h2v1h-2zM2,-3h1v1h-1zM4,-3h5v1h-5zM11,-3h1v1h-1zM4,-2h1v1h-1zM7,-2h1v1h-1zM10,-2h1v1h-1zM0,-1h1v1h-1zM5,-1h1v1h-1zM8,-1h1v1h-1zM10,-1h1v1h-1zM1,0h1v1h-1zM5,0h7v1h-7zM2,1h1v1h-1zM9,1h1v1h-1zM2,2h1v1h-1zM8,2h1v1h-1zM2,3h1v1h-1zM4,3h8v1h-8zM0,4h2v1h-2zM8,4h1v1h-1zM1,5h1v1h-1zM8,5h1v1h-1zM1,6h1v1h-1zM6,6h1v1h-1zM8,6h1v1h-1zM1,7h1v1h-1zM7,7h1v1h-1z"/></svg><svg width="12" height="6" viewBox="0 0 12 6" style="overflow:visible;vertical-align:baseline;display:inline;position:static" fill="currentColor" shape-rendering="crispEdges"><path d="M2,-4h7v1h-7zM0,-1h12v1h-12zM4,0h1v1h-1zM3,1h1v1h-1zM2,2h8v1h-8zM9,3h1v1h-1zM9,4h1v1h-1zM9,5h1v1h-1zM5,6h1v1h-1zM8,6h1v1h-1zM6,7h2v1h-2z"/></svg><svg width="12" height="6" viewBox="0 0 12 6" style="overflow:visible;vertical-align:baseline;display:inline;position:static" fill="currentColor" shape-rendering="crispEdges"><path d="M1,-4h1v1h-1zM6,-4h1v1h-1zM1,-3h1v1h-1zM6,-3h1v1h-1zM1,-2h1v1h-1zM6,-2h1v1h-1zM10,-2h1v1h-1zM1,-1h1v1h-1zM6,-1h1v1h-1zM9,-1h1v1h-1zM1,0h4v1h-4zM6,0h1v1h-1zM8,0h1v1h-1zM1,1h1v1h-1zM6,1h2v1h-2zM1,2h1v1h-1zM6,2h1v1h-1zM1,3h1v1h-1zM6,3h1v1h-1zM1,4h1v1h-1zM6,4h1v1h-1zM1,5h1v1h-1zM4,5h1v1h-1zM6,5h1v1h-1zM10,5h1v1h-1zM1,6h3v1h-3zM6,6h1v1h-1zM10,6h1v1h-1zM1,7h1v1h-1zM7,7h4v1h-4z"/></svg><svg width="12" height="6" viewBox="0 0 12 6" style="overflow:visible;vertical-align:baseline;display:inline;position:static" fill="currentColor" shape-rendering="crispEdges"><path d="M3,-4h1v1h-1zM11,-4h1v1h-1zM3,-3h6v1h-6zM11,-3h1v1h-1zM2,-2h1v1h-1zM6,-2h1v1h-1zM11,-2h1v1h-1zM2,-1h1v1h-1zM5,-1h1v1h-1zM9,-1h1v1h-1zM11,-1h1v1h-1zM1,0h2v1h-2zM5,0h3v1h-3zM9,0h1v1h-1zM11,0h1v1h-1zM0,1h1v1h-1zM2,1h1v1h-1zM4,1h1v1h-1zM7,1h1v1h-1zM9,1h1v1h-1zM11,1h1v1h-1zM2,2h1v1h-1zM4,2h1v1h-1zM7,2h1v1h-1zM9,2h1v1h-1zM11,2h1v1h-1zM2,3h2v1h-2zM5,3h1v1h-1zM7,3h1v1h-1zM9,3h1v1h-1zM11,3h1v1h-1zM2,4h1v1h-1zM6,4h1v1h-1zM9,4h1v1h-1zM11,4h1v1h-1zM2,5h1v1h-1zM6,5h1v1h-1zM11,5h1v1h-1zM2,6h1v1h-1zM5,6h1v1h-1zM11,6h1v1h-1zM2,7h1v1h-1zM4,7h1v1h-1zM10,7h2v1h-2z"/></svg></span><span class="hd" style="left:825px"><svg width="12" height="6" viewBox="0 0 12 6" style="overflow:visible;vertical-align:baseline;display:inline;position:static" fill="currentColor" shape-rendering="crispEdges"><path d="M3,-4h7v1h-7zM3,-3h1v1h-1zM9,-3h1v1h-1zM3,-2h7v1h-7zM3,-1h1v1h-1zM9,-1h1v1h-1zM0,0h12v1h-12zM2,1h1v1h-1zM5,1h1v1h-1zM2,2h4v1h-4zM7,2h4v1h-4zM2,3h1v1h-1zM5,3h1v1h-1zM7,3h1v1h-1zM10,3h1v1h-1zM2,4h4v1h-4zM8,4h1v1h-1zM10,4h1v1h-1zM2,5h1v1h-1zM5,5h2v1h-2zM9,5h1v1h-1zM0,6h6v1h-6zM8,6h1v1h-1zM10,6h1v1h-1zM5,7h3v1h-3zM11,7h1v1h-1z"/></svg><svg width="12" height="6" viewBox="0 0 12 6" style="overflow:visible;vertical-align:baseline;display:inline;position:static" fill="currentColor" shape-rendering="crispEdges"><path d="M5,-4h1v1h-1zM5,-3h1v1h-1zM5,-2h1v1h-1zM0,-1h12v1h-12zM5,0h1v1h-1zM5,1h1v1h-1zM4,2h1v1h-1zM6,2h1v1h-1zM4,3h1v1h-1zM6,3h1v1h-1zM3,4h1v1h-1zM7,4h1v1h-1zM3,5h1v1h-1zM8,5h1v1h-1zM2,6h1v1h-1zM9,6h1v1h-1zM0,7h2v1h-2zM10,7h2v1h-2z"/></svg><svg width="12" height="6" viewBox="0 0 12 6" style="overflow:visible;vertical-align:baseline;display:inline;position:static" fill="currentColor" shape-rendering="crispEdges"><path d="M1,-4h1v1h-1zM9,-4h2v1h-2zM2,-3h1v1h-1zM4,-3h5v1h-5zM11,-3h1v1h-1zM4,-2h1v1h-1zM7,-2h1v1h-1zM10,-2h1v1h-1zM0,-1h1v1h-1zM5,-1h1v1h-1zM8,-1h1v1h-1zM10,-1h1v1h-1zM1,0h1v1h-1zM5,0h7v1h-7zM2,1h1v1h-1zM9,1h1v1h-1zM2,2h1v1h-1zM8,2h1v1h-1zM2,3h1v1h-1zM4,3h8v1h-8zM0,4h2v1h-2zM8,4h1v1h-1zM1,5h1v1h-1zM8,5h1v1h-1zM1,6h1v1h-1zM6,6h1v1h-1zM8,6h1v1h-1zM1,7h1v1h-1zM7,7h1v1h-1z"/></svg><svg width="12" height="6" viewBox="0 0 12 6" style="overflow:visible;vertical-align:baseline;display:inline;position:static" fill="currentColor" shape-rendering="crispEdges"><path d="M1,-4h9v1h-9zM3,-3h1v1h-1zM8,-3h1v1h-1zM3,-2h1v1h-1zM8,-2h1v1h-1zM3,-1h1v1h-1zM5,-1h6v1h-6zM3,0h2v1h-2zM7,0h1v1h-1zM10,0h1v1h-1zM2,1h1v1h-1zM5,1h2v1h-2zM10,1h1v1h-1zM1,2h1v1h-1zM4,2h1v1h-1zM7,2h1v1h-1zM9,2h1v1h-1zM0,3h1v1h-1zM2,3h8v1h-8zM2,4h1v1h-1zM4,4h1v1h-1zM7,4h1v1h-1zM9,4h1v1h-1zM2,5h1v1h-1zM4,5h1v1h-1zM7,5h1v1h-1zM9,5h1v1h-1zM2,6h1v1h-1zM4,6h1v1h-1zM7,6h1v1h-1zM9,6h1v1h-1zM0,7h12v1h-12z"/></svg><svg width="12" height="6" viewBox="0 0 12 6" style="overflow:visible;vertical-align:baseline;display:inline;position:static" fill="currentColor" shape-rendering="crispEdges"><path d="M5,-4h1v1h-1zM5,-3h1v1h-1zM4,-2h1v1h-1zM6,-2h1v1h-1zM3,-1h1v1h-1zM7,-1h1v1h-1zM2,0h1v1h-1zM8,0h2v1h-2zM0,1h2v1h-2zM3,1h5v1h-5zM10,1h2v1h-2zM5,2h1v1h-1zM2,3h7v1h-7zM5,4h1v1h-1zM2,5h1v1h-1zM5,5h1v1h-1zM8,5h1v1h-1zM3,6h1v1h-1zM5,6h1v1h-1zM7,6h1v1h-1zM0,7h11v1h-11z"/></svg><svg width="12" height="6" viewBox="0 0 12 6" style="overflow:visible;vertical-align:baseline;display:inline;position:static" fill="currentColor" shape-rendering="crispEdges"><path d="M3,-4h1v1h-1zM7,-4h5v1h-5zM0,-3h7v1h-7zM9,-3h1v1h-1zM0,-2h1v1h-1zM2,-2h1v1h-1zM6,-2h1v1h-1zM8,-2h1v1h-1zM2,-1h4v1h-4zM7,-1h5v1h-5zM1,0h2v1h-2zM5,0h1v1h-1zM7,0h1v1h-1zM11,0h1v1h-1zM3,1h2v1h-2zM7,1h1v1h-1zM9,1h1v1h-1zM11,1h1v1h-1zM2,2h1v1h-1zM5,2h1v1h-1zM7,2h1v1h-1zM9,2h1v1h-1zM11,2h1v1h-1zM1,3h7v1h-7zM9,3h1v1h-1zM11,3h1v1h-1zM0,4h1v1h-1zM2,4h1v1h-1zM5,4h1v1h-1zM7,4h1v1h-1zM9,4h1v1h-1zM11,4h1v1h-1zM2,5h1v1h-1zM5,5h1v1h-1zM7,5h1v1h-1zM9,5h1v1h-1zM2,6h4v1h-4zM8,6h1v1h-1zM10,6h1v1h-1zM2,7h1v1h-1zM5,7h3v1h-3zM11,7h1v1h-1z"/></svg></span><span class="hd" style="left:915px"><svg width="12" height="6" viewBox="0 0 12 6" style="overflow:visible;vertical-align:baseline;display:inline;position:static" fill="currentColor" shape-rendering="crispEdges"><path d="M3,-4h7v1h-7zM3,-3h1v1h-1zM9,-3h1v1h-1zM3,-2h7v1h-7zM3,-1h1v1h-1zM9,-1h1v1h-1zM0,0h12v1h-12zM2,1h1v1h-1zM5,1h1v1h-1zM2,2h4v1h-4zM7,2h4v1h-4zM2,3h1v1h-1zM5,3h1v1h-1zM7,3h1v1h-1zM10,3h1v1h-1zM2,4h4v1h-4zM8,4h1v1h-1zM10,4h1v1h-1zM2,5h1v1h-1zM5,5h2v1h-2zM9,5h1v1h-1zM0,6h6v1h-6zM8,6h1v1h-1zM10,6h1v1h-1zM5,7h3v1h-3zM11,7h1v1h-1z"/></svg><svg width="12" height="6" viewBox="0 0 12 6" style="overflow:visible;vertical-align:baseline;display:inline;position:static" fill="currentColor" shape-rendering="crispEdges"><path d="M5,-4h1v1h-1zM5,-3h1v1h-1zM5,-2h1v1h-1zM0,-1h12v1h-12zM5,0h1v1h-1zM5,1h1v1h-1zM4,2h1v1h-1zM6,2h1v1h-1zM4,3h1v1h-1zM6,3h1v1h-1zM3,4h1v1h-1zM7,4h1v1h-1zM3,5h1v1h-1zM8,5h1v1h-1zM2,6h1v1h-1zM9,6h1v1h-1zM0,7h2v1h-2zM10,7h2v1h-2z"/></svg><svg width="12" height="6" viewBox="0 0 12 6" style="overflow:visible;vertical-align:baseline;display:inline;position:static" fill="currentColor" shape-rendering="crispEdges"><path d="M1,-4h1v1h-1zM9,-4h2v1h-2zM2,-3h1v1h-1zM4,-3h5v1h-5zM11,-3h1v1h-1zM4,-2h1v1h-1zM7,-2h1v1h-1zM10,-2h1v1h-1zM0,-1h1v1h-1zM5,-1h1v1h-1zM8,-1h1v1h-1zM10,-1h1v1h-1zM1,0h1v1h-1zM5,0h7v1h-7zM2,1h1v1h-1zM9,1h1v1h-1zM2,2h1v1h-1zM8,2h1v1h-1zM2,3h1v1h-1zM4,3h8v1h-8zM0,4h2v1h-2zM8,4h1v1h-1zM1,5h1v1h-1zM8,5h1v1h-1zM1,6h1v1h-1zM6,6h1v1h-1zM8,6h1v1h-1zM1,7h1v1h-1zM7,7h1v1h-1z"/></svg><svg width="12" height="6" viewBox="0 0 12 6" style="overflow:visible;vertical-align:baseline;display:inline;position:static" fill="currentColor" shape-rendering="crispEdges"><path d="M1,-4h9v1h-9zM3,-3h1v1h-1zM8,-3h1v1h-1zM3,-2h1v1h-1zM8,-2h1v1h-1zM3,-1h1v1h-1zM5,-1h6v1h-6zM3,0h2v1h-2zM7,0h1v1h-1zM10,0h1v1h-1zM2,1h1v1h-1zM5,1h2v1h-2zM10,1h1v1h-1zM1,2h1v1h-1zM4,2h1v1h-1zM7,2h1v1h-1zM9,2h1v1h-1zM0,3h1v1h-1zM2,3h8v1h-8zM2,4h1v1h-1zM4,4h1v1h-1zM7,4h1v1h-1zM9,4h1v1h-1zM2,5h1v1h-1zM4,5h1v1h-1zM7,5h1v1h-1zM9,5h1v1h-1zM2,6h1v1h-1zM4,6h1v1h-1zM7,6h1v1h-1zM9,6h1v1h-1zM0,7h12v1h-12z"/></svg><svg width="12" height="6" viewBox="0 0 12 6" style="overflow:visible;vertical-align:baseline;display:inline;position:static" fill="currentColor" shape-rendering="crispEdges"><path d="M1,-4h1v1h-1zM6,-4h1v1h-1zM1,-3h1v1h-1zM6,-3h1v1h-1zM1,-2h1v1h-1zM6,-2h1v1h-1zM10,-2h1v1h-1zM1,-1h1v1h-1zM6,-1h1v1h-1zM9,-1h1v1h-1zM1,0h4v1h-4zM6,0h1v1h-1zM8,0h1v1h-1zM1,1h1v1h-1zM6,1h2v1h-2zM1,2h1v1h-1zM6,2h1v1h-1zM1,3h1v1h-1zM6,3h1v1h-1zM1,4h1v1h-1zM6,4h1v1h-1zM1,5h1v1h-1zM4,5h1v1h-1zM6,5h1v1h-1zM10,5h1v1h-1zM1,6h3v1h-3zM6,6h1v1h-1zM10,6h1v1h-1zM1,7h1v1h-1zM7,7h4v1h-4z"/></svg><svg width="12" height="6" viewBox="0 0 12 6" style="overflow:visible;vertical-align:baseline;display:inline;position:static" fill="currentColor" shape-rendering="crispEdges"><path d="M3,-4h1v1h-1zM11,-4h1v1h-1zM3,-3h6v1h-6zM11,-3h1v1h-1zM2,-2h1v1h-1zM6,-2h1v1h-1zM11,-2h1v1h-1zM2,-1h1v1h-1zM5,-1h1v1h-1zM9,-1h1v1h-1zM11,-1h1v1h-1zM1,0h2v1h-2zM5,0h3v1h-3zM9,0h1v1h-1zM11,0h1v1h-1zM0,1h1v1h-1zM2,1h1v1h-1zM4,1h1v1h-1zM7,1h1v1h-1zM9,1h1v1h-1zM11,1h1v1h-1zM2,2h1v1h-1zM4,2h1v1h-1zM7,2h1v1h-1zM9,2h1v1h-1zM11,2h1v1h-1zM2,3h2v1h-2zM5,3h1v1h-1zM7,3h1v1h-1zM9,3h1v1h-1zM11,3h1v1h-1zM2,4h1v1h-1zM6,4h1v1h-1zM9,4h1v1h-1zM11,4h1v1h-1zM2,5h1v1h-1zM6,5h1v1h-1zM11,5h1v1h-1zM2,6h1v1h-1zM5,6h1v1h-1zM11,6h1v1h-1zM2,7h1v1h-1zM4,7h1v1h-1zM10,7h2v1h-2z"/></svg></span></div>
<div class="row" style="top:172px"><span class="w" style="left:5px">2025.02.24<span style="position:static;letter-spacing:-0.8px"> </span><span style="position:static;font-size:10px;letter-spacing:-0.7px">~</span> 2025.03.02</span><span class="r" style="left:165px">5.30</span><span class="r" style="left:225px">0.10</span><span class="r" style="left:285px">53</span><span class="r" style="left:345px">256.00</span><span class="r" style="left:425px">0.97 %</span><span class="w" style="left:495px">0.00</span><span class="w" style="left:565px">26578.91</span><span class="g" style="left:655px">-30.20</span><span class="g" style="left:745px">-0.12 %</span><span class="r" style="left:825px">94.8</span><span class="r" style="left:915px">0.36 %</span></div>
<div class="row" style="top:186px"><span class="w" style="left:5px">2025.02.17<span style="position:static;letter-spacing:-0.8px"> </span><span style="position:static;font-size:10px;letter-spacing:-0.7px">~</span> 2025.02.23</span><span class="r" style="left:165px">6.20</span><span class="r" style="left:225px">0.10</span><span class="r" style="left:285px">62</span><span class="r" style="left:345px">219.00</span><span class="r" style="left:425px">0.84 %</span><span class="w" style="left:495px">0.00</span><span class="w" style="left:565px">26322.91</span><span class="g" style="left:655px">-32.40</span><span class="g" style="left:745px">-0.12 %</span><span class="r" style="left:825px">97.3</span><span class="r" style="left:915px">0.37 %</span></div>
<div class="row" style="top:200px"><span class="w" style="left:5px">2025.02.10<span style="position:static;letter-spacing:-0.8px"> </span><span style="position:static;font-size:10px;letter-spacing:-0.7px">~</span> 2025.02.16</span><span class="r" style="left:165px">10.10</span><span class="r" style="left:225px">0.10</span><span class="r" style="left:285px">101</span><span class="r" style="left:345px">29.00</span><span class="r" style="left:425px">0.11 %</span><span class="w" style="left:495px">0.00</span><span class="w" style="left:565px">26103.91</span><span class="g" style="left:655px">-30.20</span><span class="g" style="left:745px">-0.12 %</span><span class="r" style="left:825px">78.6</span><span class="r" style="left:915px">0.30 %</span></div>
<div class="row" style="top:214px"><span class="w" style="left:5px">2025.02.03<span style="position:static;letter-spacing:-0.8px"> </span><span style="position:static;font-size:10px;letter-spacing:-0.7px">~</span> 2025.02.09</span><span class="g" style="left:165px">10.20</span><span class="g" style="left:225px">0.10</span><span class="g" style="left:285px">102</span><span class="g" style="left:345px">-41.40</span><span class="g" style="left:425px">-0.16 %</span><span class="w" style="left:495px">0.00</span><span class="w" style="left:565px">26074.91</span><span class="w" style="left:655px">0.00</span><span class="w" style="left:745px">0.00 %</span><span class="w" style="left:825px">0</span><span class="w" style="left:915px">0.00 %</span></div>
<div class="row" style="top:228px"><span class="w" style="left:5px">2025.01.27<span style="position:static;letter-spacing:-0.8px"> </span><span style="position:static;font-size:10px;letter-spacing:-0.7px">~</span> 2025.02.02</span><span class="r" style="left:165px">3.10</span><span class="r" style="left:225px">0.10</span><span class="r" style="left:285px">31</span><span class="r" style="left:345px">61.30</span><span class="r" style="left:425px">0.24 %</span><span class="w" style="left:495px">0.00</span><span class="w" style="left:565px">26116.31</span><span class="w" style="left:655px">0.00</span><span class="w" style="left:745px">0.00 %</span><span class="w" style="left:825px">0</span><span class="w" style="left:915px">0.00 %</span></div>
<div class="row" style="top:242px"><span class="w" style="left:5px">2025.01.20<span style="position:static;letter-spacing:-0.8px"> </span><span style="position:static;font-size:10px;letter-spacing:-0.7px">~</span> 2025.01.26</span><span class="r" style="left:165px">3.50</span><span class="r" style="left:225px">0.10</span><span class="r" style="left:285px">35</span><span class="r" style="left:345px">82.90</span><span class="r" style="left:425px">0.32 %</span><span class="w" style="left:495px">0.00</span><span class="w" style="left:565px">26055.01</span><span class="w" style="left:655px">0.00</span><span class="w" style="left:745px">0.00 %</span><span class="w" style="left:825px">0</span><span class="w" style="left:915px">0.00 %</span></div>
<div class="row" style="top:256px"><span class="w" style="left:5px">2025.01.13<span style="position:static;letter-spacing:-0.8px"> </span><span style="position:static;font-size:10px;letter-spacing:-0.7px">~</span> 2025.01.19</span><span class="g" style="left:165px">2.80</span><span class="g" style="left:225px">0.10</span><span class="g" style="left:285px">28</span><span class="g" style="left:345px">-43.40</span><span class="g" style="left:425px">-0.17 %</span><span class="w" style="left:495px">0.00</span><span class="w" style="left:565px">25972.11</span><span class="w" style="left:655px">0.00</span><span class="w" style="left:745px">0.00 %</span><span class="w" style="left:825px">0</span><span class="w" style="left:915px">0.00 %</span></div>
<div class="row" style="top:270px"><span class="w" style="left:5px">2025.01.06<span style="position:static;letter-spacing:-0.8px"> </span><span style="position:static;font-size:10px;letter-spacing:-0.7px">~</span> 2025.01.12</span><span class="r" style="left:165px">5.80</span><span class="r" style="left:225px">0.10</span><span class="r" style="left:285px">58</span><span class="r" style="left:345px">66.10</span><span class="r" style="left:425px">0.25 %</span><span class="w" style="left:495px">0.00</span><span class="w" style="left:565px">26015.51</span><span class="w" style="left:655px">0.00</span><span class="w" style="left:745px">0.00 %</span><span class="w" style="left:825px">0</span><span class="w" style="left:915px">0.00 %</span></div>
<div class="row" style="top:284px"><span class="w" style="left:5px">2024.12.30<span style="position:static;letter-spacing:-0.8px"> </span><span style="position:static;font-size:10px;letter-spacing:-0.7px">~</span> 2025.01.05</span><span class="g" style="left:165px">1.20</span><span class="g" style="left:225px">0.10</span><span class="g" style="left:285px">12</span><span class="g" style="left:345px">-4.00</span><span class="g" style="left:425px">-0.02 %</span><span class="w" style="left:495px">0.00</span><span class="w" style="left:565px">25949.41</span><span class="w" style="left:655px">0.00</span><span class="w" style="left:745px">0.00 %</span><span class="w" style="left:825px">0</span><span class="w" style="left:915px">0.00 %</span></div>
<div class="row" style="top:298px"><span class="w" style="left:5px">2024.12.23<span style="position:static;letter-spacing:-0.8px"> </span><span style="position:static;font-size:10px;letter-spacing:-0.7px">~</span> 2024.12.29</span><span class="g" style="left:165px">0.30</span><span class="g" style="left:225px">0.10</span><span class="g" style="left:285px">3</span><span class="g" style="left:345px">-85.70</span><span class="g" style="left:425px">-0.33 %</span><span class="w" style="left:495px">0.00</span><span class="w" style="left:565px">25953.41</span><span class="w" style="left:655px">0.00</span><span class="w" style="left:745px">0.00 %</span><span class="w" style="left:825px">0</span><span class="w" style="left:915px">0.00 %</span></div>
<div class="row" style="top:312px"><span class="w" style="left:5px">2024.12.16<span style="position:static;letter-spacing:-0.8px"> </span><span style="position:static;font-size:10px;letter-spacing:-0.7px">~</span> 2024.12.22</span><span class="g" style="left:165px">3.60</span><span class="g" style="left:225px">0.10</span><span class="g" style="left:285px">36</span><span class="g" style="left:345px">-146.40</span><span class="g" style="left:425px">-0.56 %</span><span class="w" style="left:495px">0.00</span><span class="w" style="left:565px">26039.11</span><span class="w" style="left:655px">0.00</span><span class="w" style="left:745px">0.00 %</span><span class="w" style="left:825px">0</span><span class="w" style="left:915px">0.00 %</span></div>
<div class="row" style="top:326px"><span class="w" style="left:5px">2024.12.09<span style="position:static;letter-spacing:-0.8px"> </span><span style="position:static;font-size:10px;letter-spacing:-0.7px">~</span> 2024.12.15</span><span class="r" style="left:165px">5.70</span><span class="r" style="left:225px">0.10</span><span class="r" style="left:285px">57</span><span class="r" style="left:345px">223.99</span><span class="r" style="left:425px">0.86 %</span><span class="w" style="left:495px">0.00</span><span class="w" style="left:565px">26185.51</span><span class="w" style="left:655px">0.00</span><span class="w" style="left:745px">0.00 %</span><span class="w" style="left:825px">0</span><span class="w" style="left:915px">0.00 %</span></div>
<div class="row" style="top:340px"><span class="w" style="left:5px">2024.12.02<span style="position:static;letter-spacing:-0.8px"> </span><span style="position:static;font-size:10px;letter-spacing:-0.7px">~</span> 2024.12.08</span><span class="r" style="left:165px">5.30</span><span class="r" style="left:225px">0.10</span><span class="r" style="left:285px">53</span><span class="r" style="left:345px">264.00</span><span class="r" style="left:425px">1.03 %</span><span class="w" style="left:495px">0.00</span><span class="w" style="left:565px">25961.52</span><span class="w" style="left:655px">0.00</span><span class="w" style="left:745px">0.00 %</span><span class="w" style="left:825px">0</span><span class="w" style="left:915px">0.00 %</span></div>
<div class="row" style="top:354px"><span class="w" style="left:5px">2024.11.25<span style="position:static;letter-spacing:-0.8px"> </span><span style="position:static;font-size:10px;letter-spacing:-0.7px">~</span> 2024.12.01</span><span class="r" style="left:165px">9.20</span><span class="r" style="left:225px">0.10</span><span class="r" style="left:285px">92</span><span class="r" style="left:345px">239.80</span><span class="r" style="left:425px">0.94 %</span><span class="w" style="left:495px">0.00</span><span class="w" style="left:565px">25697.52</span><span class="w" style="left:655px">0.00</span><span class="w" style="left:745px">0.00 %</span><span class="w" style="left:825px">0</span><span class="w" style="left:915px">0.00 %</span></div>
<div class="row" style="top:368px"><span class="w" style="left:5px">2024.11.18<span style="position:static;letter-spacing:-0.8px"> </span><span style="position:static;font-size:10px;letter-spacing:-0.7px">~</span> 2024.11.24</span><span class="r" style="left:165px">2.00</span><span class="r" style="left:225px">0.10</span><span class="r" style="left:285px">20</span><span class="r" style="left:345px">117.50</span><span class="r" style="left:425px">0.46 %</span><span class="w" style="left:495px">0.00</span><span class="w" style="left:565px">25457.72</span><span class="w" style="left:655px">0.00</span><span class="w" style="left:745px">0.00 %</span><span class="w" style="left:825px">0</span><span class="w" style="left:915px">0.00 %</span></div>
<div class="row" style="top:382px"><span class="w" style="left:5px">2024.11.11<span style="position:static;letter-spacing:-0.8px"> </span><span style="position:static;font-size:10px;letter-spacing:-0.7px">~</span> 2024.11.17</span><span class="r" style="left:165px">5.90</span><span class="r" style="left:225px">0.10</span><span class="r" style="left:285px">59</span><span class="r" style="left:345px">14.00</span><span class="r" style="left:425px">0.06 %</span><span class="w" style="left:495px">0.00</span><span class="w" style="left:565px">25340.22</span><span class="w" style="left:655px">0.00</span><span class="w" style="left:745px">0.00 %</span><span class="w" style="left:825px">0</span><span class="w" style="left:915px">0.00 %</span></div>
<div class="row" style="top:396px"><span class="w" style="left:5px">2024.11.04<span style="position:static;letter-spacing:-0.8px"> </span><span style="position:static;font-size:10px;letter-spacing:-0.7px">~</span> 2024.11.10</span><span class="r" style="left:165px">28.88</span><span class="r" style="left:225px">1.78</span><span class="r" style="left:285px">72</span><span class="r" style="left:345px">5591.91</span><span class="r" style="left:425px">28.34 %</span><span class="w" style="left:495px">0.00</span><span class="w" style="left:565px">25326.22</span><span class="w" style="left:655px">0.00</span><span class="w" style="left:745px">0.00 %</span><span class="w" style="left:825px">0</span><span class="w" style="left:915px">0.00 %</span></div>
<div class="row" style="top:410px"><span class="w" style="left:5px">2024.10.28<span style="position:static;letter-spacing:-0.8px"> </span><span style="position:static;font-size:10px;letter-spacing:-0.7px">~</span> 2024.11.03</span><span class="g" style="left:165px">33.94</span><span class="g" style="left:225px">1.52</span><span class="g" style="left:285px">24</span><span class="g" style="left:345px">-4.42</span><span class="g" style="left:425px">-0.02 %</span><span class="w" style="left:495px">0.00</span><span class="w" style="left:565px">19734.31</span><span class="w" style="left:655px">0.00</span><span class="w" style="left:745px">0.00 %</span><span class="w" style="left:825px">0</span><span class="w" style="left:915px">0.00 %</span></div>
<div class="row" style="top:424px"><span class="w" style="left:5px">2024.10.21<span style="position:static;letter-spacing:-0.8px"> </span><span style="position:static;font-size:10px;letter-spacing:-0.7px">~</span> 2024.10.27</span><span class="r" style="left:165px">41.76</span><span class="r" style="left:225px">1.52</span><span class="r" style="left:285px">29</span><span class="r" style="left:345px">1148.19</span><span class="r" style="left:425px">6.18 %</span><span class="w" style="left:495px">0.00</span><span class="w" style="left:565px">19738.73</span><span class="w" style="left:655px">0.00</span><span class="w" style="left:745px">0.00 %</span><span class="w" style="left:825px">0</span><span class="w" style="left:915px">0.00 %</span></div>
<div class="row" style="top:438px"><span class="w" style="left:5px">2024.10.14<span style="position:static;letter-spacing:-0.8px"> </span><span style="position:static;font-size:10px;letter-spacing:-0.7px">~</span> 2024.10.20</span><span class="r" style="left:165px">30.60</span><span class="r" style="left:225px">1.45</span><span class="r" style="left:285px">22</span><span class="r" style="left:345px">216.84</span><span class="r" style="left:425px">1.18 %</span><span class="w" style="left:495px">0.00</span><span class="w" style="left:565px">18590.54</span><span class="w" style="left:655px">0.00</span><span class="w" style="left:745px">0.00 %</span><span class="w" style="left:825px">0</span><span class="w" style="left:915px">0.00 %</span></div>
<div class="row" style="top:452px"><span class="w" style="left:5px">2024.10.07<span style="position:static;letter-spacing:-0.8px"> </span><span style="position:static;font-size:10px;letter-spacing:-0.7px">~</span> 2024.10.13</span><span class="r" style="left:165px">44.20</span><span class="r" style="left:225px">1.53</span><span class="r" style="left:285px">32</span><span class="r" style="left:345px">1939.40</span><span class="r" style="left:425px">11.80 %</span><span class="w" style="left:495px">0.00</span><span class="w" style="left:565px">18373.70</span><span class="w" style="left:655px">0.00</span><span class="w" style="left:745px">0.00 %</span><span class="w" style="left:825px">0</span><span class="w" style="left:915px">0.00 %</span></div>
<div class="row" style="top:466px"><span class="w" style="left:5px">2024.09.30<span style="position:static;letter-spacing:-0.8px"> </span><span style="position:static;font-size:10px;letter-spacing:-0.7px">~</span> 2024.10.06</span><span class="r" style="left:165px">91.20</span><span class="r" style="left:225px">1.57</span><span class="r" style="left:285px">72</span><span class="r" style="left:345px">847.98</span><span class="r" style="left:425px">5.44 %</span><span class="w" style="left:495px">0.00</span><span class="w" style="left:565px">16434.30</span><span class="w" style="left:655px">0.00</span><span class="w" style="left:745px">0.00 %</span><span class="w" style="left:825px">0</span><span class="w" style="left:915px">0.00 %</span></div>
<div class="row" style="top:480px"><span class="w" style="left:5px">2024.09.23<span style="position:static;letter-spacing:-0.8px"> </span><span style="position:static;font-size:10px;letter-spacing:-0.7px">~</span> 2024.09.29</span><span class="g" style="left:165px">77.56</span><span class="g" style="left:225px">1.72</span><span class="g" style="left:285px">51</span><span class="g" style="left:345px">-22.83</span><span class="g" style="left:425px">-0.15 %</span><span class="w" style="left:495px">0.00</span><span class="w" style="left:565px">15586.32</span><span class="w" style="left:655px">0.00</span><span class="w" style="left:745px">0.00 %</span><span class="w" style="left:825px">0</span><span class="w" style="left:915px">0.00 %</span></div>
<div class="row" style="top:494px"><span class="w" style="left:5px">2024.09.16<span style="position:static;letter-spacing:-0.8px"> </span><span style="position:static;font-size:10px;letter-spacing:-0.7px">~</span> 2024.09.22</span><span class="r" style="left:165px">102.87</span><span class="r" style="left:225px">2.17</span><span class="r" style="left:285px">85</span><span class="r" style="left:345px">11719.00</span><span class="r" style="left:425px">301.25 %</span><span class="w" style="left:495px">0.00</span><span class="w" style="left:565px">15609.15</span><span class="w" style="left:655px">0.00</span><span class="w" style="left:745px">0.00 %</span><span class="w" style="left:825px">0</span><span class="w" style="left:915px">0.00 %</span></div>
<div class="row" style="top:508px"><span class="w" style="left:5px">2024.09.09<span style="position:static;letter-spacing:-0.8px"> </span><span style="position:static;font-size:10px;letter-spacing:-0.7px">~</span> 2024.09.15</span><span class="g" style="left:165px">32.35</span><span class="g" style="left:225px">0.86</span><span class="g" style="left:285px">45</span><span class="g" style="left:345px">-1804.10</span><span class="g" style="left:425px">-31.68 %</span><span class="w" style="left:495px">0.00</span><span class="w" style="left:565px">3890.15</span><span class="w" style="left:655px">0.00</span><span class="w" style="left:745px">0.00 %</span><span class="w" style="left:825px">0</span><span class="w" style="left:915px">0.00 %</span></div>
<div class="row" style="top:522px"><span class="w" style="left:5px">2024.09.02<span style="position:static;letter-spacing:-0.8px"> </span><span style="position:static;font-size:10px;letter-spacing:-0.7px">~</span> 2024.09.08</span><span class="r" style="left:165px">44.64</span><span class="r" style="left:225px">0.93</span><span class="r" style="left:285px">56</span><span class="r" style="left:345px">432.78</span><span class="r" style="left:425px">8.23 %</span><span class="w" style="left:495px">0.00</span><span class="w" style="left:565px">5694.25</span><span class="w" style="left:655px">0.00</span><span class="w" style="left:745px">0.00 %</span><span class="w" style="left:825px">0</span><span class="w" style="left:915px">0.00 %</span></div>
<div class="row" style="top:536px"><span class="w" style="left:5px">2024.08.26<span style="position:static;letter-spacing:-0.8px"> </span><span style="position:static;font-size:10px;letter-spacing:-0.7px">~</span> 2024.09.01</span><span class="r" style="left:165px">16.92</span><span class="r" style="left:225px">0.80</span><span class="r" style="left:285px">24</span><span class="r" style="left:345px">1070.72</span><span class="r" style="left:425px">25.55 %</span><span class="w" style="left:495px">0.00</span><span class="w" style="left:565px">5261.47</span><span class="w" style="left:655px">0.00</span><span class="w" style="left:745px">0.00 %</span><span class="w" style="left:825px">0</span><span class="w" style="left:915px">0.00 %</span></div>
<div class="row" style="top:550px"><span class="w" style="left:5px">2024.08.19<span style="position:static;letter-spacing:-0.8px"> </span><span style="position:static;font-size:10px;letter-spacing:-0.7px">~</span> 2024.08.25</span><span class="g" style="left:165px">33.04</span><span class="g" style="left:225px">0.80</span><span class="g" style="left:285px">47</span><span class="g" style="left:345px">-660.49</span><span class="g" style="left:425px">-13.61 %</span><span class="w" style="left:495px">0.00</span><span class="w" style="left:565px">4190.75</span><span class="w" style="left:655px">0.00</span><span class="w" style="left:745px">0.00 %</span><span class="w" style="left:825px">0</span><span class="w" style="left:915px">0.00 %</span></div>
<div class="row" style="top:564px"><span class="w" style="left:5px">2024.08.12<span style="position:static;letter-spacing:-0.8px"> </span><span style="position:static;font-size:10px;letter-spacing:-0.7px">~</span> 2024.08.18</span><span class="r" style="left:165px">31.65</span><span class="r" style="left:225px">0.73</span><span class="r" style="left:285px">52</span><span class="r" style="left:345px">1851.24</span><span class="r" style="left:425px">61.71 %</span><span class="r" style="left:495px">3000.00</span><span class="w" style="left:565px">4851.24</span><span class="w" style="left:655px">0.00</span><span class="w" style="left:745px">0.00 %</span><span class="w" style="left:825px">0</span><span class="w" style="left:915px">0.00 %</span></div>
<div class="total"></div>
<div class="row" style="top:579px"><span class="hd" style="left:5px"><svg width="12" height="6" viewBox="0 0 12 6" style="overflow:visible;vertical-align:baseline;display:inline;position:static" fill="currentColor" shape-rendering="crispEdges"><path d="M5,-4h1v1h-1zM5,-3h1v1h-1zM4,-2h1v1h-1zM6,-2h1v1h-1zM3,-1h1v1h-1zM7,-1h1v1h-1zM2,0h1v1h-1zM8,0h2v1h-2zM0,1h2v1h-2zM3,1h5v1h-5zM10,1h2v1h-2zM2,3h7v1h-7zM2,4h1v1h-1zM8,4h1v1h-1zM2,5h1v1h-1zM8,5h1v1h-1zM2,6h7v1h-7zM2,7h1v1h-1zM8,7h1v1h-1z"/></svg><svg width="12" height="6" viewBox="0 0 12 6" style="overflow:visible;vertical-align:baseline;display:inline;position:static" fill="currentColor" shape-rendering="crispEdges"><path d="M1,-4h1v1h-1zM8,-4h1v1h-1zM2,-3h1v1h-1zM8,-3h1v1h-1zM2,-2h1v1h-1zM8,-2h1v1h-1zM8,-1h1v1h-1zM0,0h3v1h-3zM5,0h7v1h-7zM2,1h1v1h-1zM8,1h1v1h-1zM2,2h1v1h-1zM8,2h1v1h-1zM2,3h1v1h-1zM8,3h1v1h-1zM2,4h1v1h-1zM8,4h1v1h-1zM2,5h1v1h-1zM4,5h1v1h-1zM8,5h1v1h-1zM2,6h2v1h-2zM8,6h1v1h-1zM2,7h1v1h-1zM8,7h1v1h-1z"/></svg></span><span class="r" style="left:165px">689.81</span><span class="r" style="left:345px">23578.91</span><span class="r" style="left:425px">785.96 %</span><span class="r" style="left:495px">3000.00</span><span class="g" style="left:655px">-32.4</span><span class="g" style="left:745px">-0.12 %</span><span class="r" style="left:825px">97.3</span><span class="r" style="left:915px">0.37 %</span></div>
<div class="botline"></div>
<svg width="1009" height="593" style="position:absolute;left:0;top:0"><path fill="#9c9c9c" fill-rule="evenodd" stroke="#dcdcdc" stroke-width="0.9" d="M890.5,551.5 L896.5,551.5 L896.5,554.5 L897.5,554.5 L897.5,559.5 L896.5,559.5 L896.5,584.5 L887.5,584.5 L887.5,580.5 L890.5,580.5 L890.5,572.5 L886.5,572.5 L886.5,567.5 L890.5,567.5 L890.5,559.5 L886.5,559.5 L886.5,554.5 L890.5,554.5Z M900.5,551.5 L919.5,551.5 L919.5,556.5 L906.5,556.5 L906.5,560.5 L919.5,560.5 L919.5,565.5 L900.5,565.5Z M901.5,566.5 L919.5,566.5 L919.5,584.5 L901.5,584.5Z M906.5,570.5 L914.5,570.5 L914.5,574.5 L906.5,574.5Z M906.5,576.5 L914.5,576.5 L914.5,580.5 L906.5,580.5Z M927.5,551.5 L932.5,551.5 L932.5,554.5 L937.5,554.5 L937.5,558.5 L932.5,558.5 L932.5,584.5 L927.5,584.5 L927.5,558.5 L922.5,558.5 L922.5,554.5 L927.5,554.5Z M922.5,561.5 L926.5,561.5 L926.5,582.5 L922.5,582.5Z M934.5,562.5 L936.5,562.5 L936.5,577.5 L934.5,577.5Z M938.5,552.5 L954.5,552.5 L954.5,556.5 L938.5,556.5Z M937.5,560.5 L955.5,560.5 L955.5,565.5 L948.5,565.5 L948.5,584.5 L943.5,584.5 L943.5,565.5 L937.5,565.5Z M937.5,567.5 L942.5,567.5 L942.5,583.5 L937.5,583.5Z M949.5,567.5 L955.5,567.5 L955.5,583.5 L949.5,583.5Z M958.5,551.5 L963.5,551.5 L963.5,555.5 L971.5,555.5 L971.5,584.5 L962.5,584.5 L962.5,574.5 L958.5,574.5 L958.5,569.5 L962.5,569.5 L962.5,565.5 L958.5,565.5Z M967.5,565.5 L971.5,565.5 L971.5,569.5 L967.5,569.5Z M967.5,574.5 L971.5,574.5 L971.5,579.5 L967.5,579.5Z M978.5,551.5 L983.5,551.5 L983.5,553.5 L990.5,553.5 L990.5,558.5 L983.5,558.5 L983.5,561.5 L991.5,561.5 L991.5,584.5 L986.5,584.5 L986.5,578.5 L984.5,578.5 L984.5,584.5 L978.5,584.5 L978.5,578.5 L976.5,578.5 L976.5,584.5 L972.5,584.5 L972.5,561.5 L978.5,561.5 L978.5,558.5 L972.5,558.5 L972.5,554.5 L978.5,554.5Z"/><circle cx="977.6" cy="566.3" r="1.1" fill="#3a3a3a" stroke="#e0e0e0" stroke-width="0.7"/><circle cx="985.4" cy="566.3" r="1.1" fill="#3a3a3a" stroke="#e0e0e0" stroke-width="0.7"/><circle cx="977.6" cy="573.3" r="1.1" fill="#3a3a3a" stroke="#e0e0e0" stroke-width="0.7"/><circle cx="985.4" cy="573.3" r="1.1" fill="#3a3a3a" stroke="#e0e0e0" stroke-width="0.7"/><circle cx="985.4" cy="553.4" r="1.1" fill="#3a3a3a" stroke="#e0e0e0" stroke-width="0.7"/></svg>
</body></html>
